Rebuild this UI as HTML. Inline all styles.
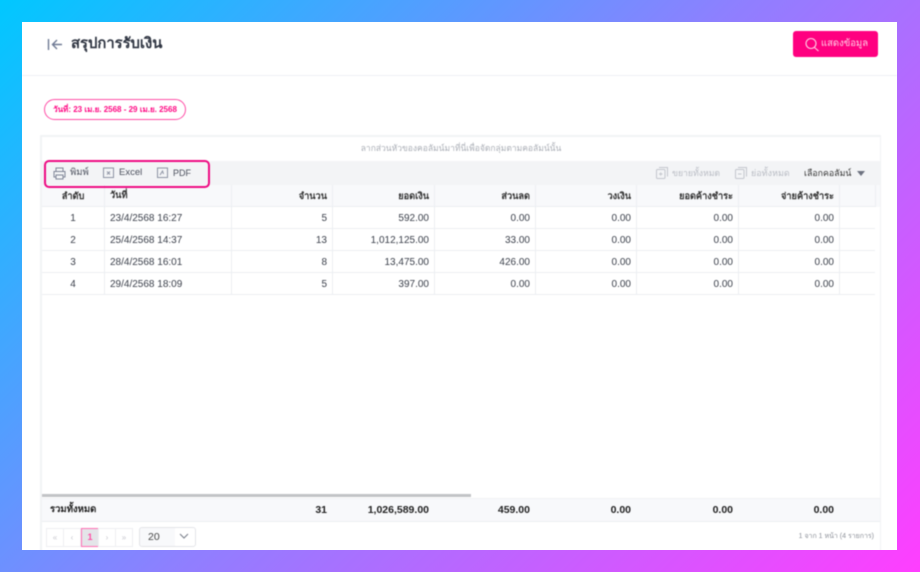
<!DOCTYPE html>
<html><head><meta charset="utf-8">
<style>
*{box-sizing:border-box}
html,body{margin:0;padding:0;width:920px;height:572px;overflow:hidden}
body{background:linear-gradient(135deg,#00c8ff 0%,#8f7fff 50%,#ff3eff 100%);font-family:"Liberation Sans","DejaVu Sans","Noto Sans CJK SC",sans-serif;color:#3a3f4a;position:relative}
.a{position:absolute;white-space:nowrap}
#p{position:absolute;left:22px;top:22px;width:875px;height:528px;background:#fff;overflow:hidden}
#w{position:absolute;left:-22px;top:-22px;width:920px;height:572px;filter:blur(.4px)}
.c{position:absolute;font-size:10px;line-height:22px;height:22px;padding:0 5px;white-space:nowrap;overflow:hidden;margin-top:1px}
.r{text-align:right}.m{text-align:center}
.hd{font-weight:bold;color:#333;font-size:9.2px;margin-top:0;height:22px}
.f{font-weight:bold;color:#222;font-size:10.5px;margin-top:0}
.l{position:absolute;background:#eceef2}
.pg{position:absolute;top:528px;height:19px;width:18px;border:1px solid #eeeff2;font-size:8px;line-height:17px;text-align:center;color:#c8c8cf}
</style></head>
<body>
<div id="p"><div id="w">
<svg class="a" style="left:46px;top:37px" width="18" height="15" viewBox="0 0 18 15" fill="none" stroke="#6f7a94" stroke-width="1.4"><path d="M2.5 2v11"/><path d="M16 7.5H7M11 3L6.5 7.5L11 12"/></svg>
<div class="a" style="left:71px;top:35px;font-size:14.8px;line-height:18px;font-weight:bold;color:#2f3542">สรุปการรับเงิน</div>
<div class="a" style="left:793px;top:31px;width:85px;height:26px;background:#ff0080;border-radius:3px"></div>
<svg class="a" style="left:804px;top:37px" width="16" height="15" viewBox="0 0 16 15" fill="none" stroke="#ffd0e6" stroke-width="1.1"><circle cx="7" cy="6.5" r="5"/><path d="M10.5 10.5L14.5 14"/></svg>
<div class="a" style="left:821px;top:37px;font-size:9.5px;line-height:14px;color:#ffd0e6">แสดงข้อมูล</div>
<div class="a" style="left:22px;top:75px;width:875px;height:1px;background:#eef0f5"></div>
<div class="a" style="left:44px;top:99px;width:142px;height:21px;border:1px solid #ff4da6;border-radius:11px;font-size:8px;line-height:19px;text-align:center;color:#ff0a84;font-weight:bold">วันที่: 23 เม.ย. 2568 - 29 เม.ย. 2568</div>

<div class="a" style="left:40px;top:135px;width:841px;height:420px;border:2px solid #f2f3f5;border-bottom:0;border-right-width:1px"></div>
<div class="a" style="left:42px;top:141px;width:838px;text-align:center;font-size:8.5px;line-height:14px;color:#a9adb5">ลากส่วนหัวของคอลัมน์มาที่นี่เพื่อจัดกลุ่มตามคอลัมน์นั้น</div>
<div class="a" style="left:42px;top:161px;width:838px;height:24px;background:#f3f4f6"></div>
<div class="a" style="left:42px;top:185px;width:838px;height:22px;background:#f8f9fb"></div>
<div class="a" style="left:42px;top:498px;width:838px;height:24px;background:#f8f9fb;border-top:1px solid #f0f1f4;border-bottom:1px solid #eceef2"></div>
<div class="a" style="left:42px;top:494px;width:429px;height:3px;background:#c2c3c6"></div>

<div class="l" style="left:42px;top:206px;width:833px;height:1px"></div>
<div class="l" style="left:42px;top:228px;width:833px;height:1px"></div>
<div class="l" style="left:42px;top:250px;width:833px;height:1px"></div>
<div class="l" style="left:42px;top:272px;width:833px;height:1px"></div>
<div class="l" style="left:42px;top:294px;width:833px;height:1px"></div>
<div class="l" style="left:104px;top:185px;width:1px;height:110px"></div>
<div class="l" style="left:231px;top:185px;width:1px;height:110px"></div>
<div class="l" style="left:332px;top:185px;width:1px;height:110px"></div>
<div class="l" style="left:434px;top:185px;width:1px;height:110px"></div>
<div class="l" style="left:535px;top:185px;width:1px;height:110px"></div>
<div class="l" style="left:636px;top:185px;width:1px;height:110px"></div>
<div class="l" style="left:738px;top:185px;width:1px;height:110px"></div>
<div class="l" style="left:839px;top:185px;width:1px;height:110px"></div>
<div class="l" style="left:875px;top:185px;width:1px;height:22px"></div>

<svg class="a" style="left:53px;top:167px" width="13" height="13" viewBox="0 0 13 13" fill="none" stroke="#7d8496"><path d="M3 4V1h7v3M3 10H1V4.5h11V10h-2M3 8h7v4H3z"/></svg>
<div class="a" style="left:70px;top:166px;font-size:9.5px;line-height:14px;color:#4a4f5c">พิมพ์</div>
<svg class="a" style="left:103px;top:167px" width="12" height="12" viewBox="0 0 12 12" fill="none" stroke="#8d93a3"><rect x=".5" y="1" width="10" height="9.5"/><path d="M4 4.5l3 3M7 4.5l-3 3"/></svg>
<div class="a" style="left:119px;top:166px;font-size:9.5px;line-height:14px;color:#4a4f5c">Excel</div>
<svg class="a" style="left:157px;top:167px" width="12" height="12" viewBox="0 0 12 12" fill="none" stroke="#8d93a3"><rect x=".5" y="1" width="10" height="9.5"/><path d="M3 8l2.5-4 1 3"/></svg>
<div class="a" style="left:173px;top:166px;font-size:9px;line-height:14px;color:#4a4f5c">PDF</div>
<div class="a" style="left:44px;top:160px;width:166px;height:28px;border:2.5px solid #ee0a82;border-radius:5px"></div>

<svg class="a" style="left:656px;top:167px" width="12" height="12" viewBox="0 0 12 12" fill="none" stroke="#c3c6cd"><rect x=".5" y="2.5" width="8.5" height="9" rx="1"/><path d="M3 .5h8.5v9M3 7h3.5M4.7 5.2v3.5"/></svg>
<div class="a" style="left:672px;top:166px;font-size:8.7px;line-height:14px;color:#b9bcc4">ขยายทั้งหมด</div>
<svg class="a" style="left:735px;top:167px" width="12" height="12" viewBox="0 0 12 12" fill="none" stroke="#c3c6cd"><rect x=".5" y="2.5" width="8.5" height="9" rx="1"/><path d="M3 .5h8.5v9M3 7h3.5"/></svg>
<div class="a" style="left:751px;top:166px;font-size:9px;line-height:14px;color:#b9bcc4">ย่อทั้งหมด</div>
<div class="a" style="left:804px;top:166px;font-size:8.8px;line-height:14px;color:#333;font-weight:500">เลือกคอลัมน์</div>
<div class="a" style="left:857px;top:171px;border-left:4px solid transparent;border-right:4px solid transparent;border-top:5px solid #6d7280"></div>

<div class="c hd m" style="left:42px;top:185px;width:62px">ลำดับ</div>
<div class="c hd" style="left:105px;top:184px;width:126px">วันที่</div>
<div class="c hd r" style="left:232px;top:185px;width:100px">จำนวน</div>
<div class="c hd r" style="left:333px;top:185px;width:101px">ยอดเงิน</div>
<div class="c hd r" style="left:435px;top:185px;width:100px">ส่วนลด</div>
<div class="c hd r" style="left:536px;top:185px;width:100px">วงเงิน</div>
<div class="c hd r" style="left:637px;top:185px;width:101px">ยอดค้างชำระ</div>
<div class="c hd r" style="left:739px;top:185px;width:100px">จ่ายค้างชำระ</div>

<div class="c m" style="left:42px;top:207px;width:62px">1</div><div class="c" style="left:105px;top:207px;width:126px">23/4/2568 16:27</div><div class="c r" style="left:232px;top:207px;width:100px">5</div><div class="c r" style="left:333px;top:207px;width:101px">592.00</div><div class="c r" style="left:435px;top:207px;width:100px">0.00</div><div class="c r" style="left:536px;top:207px;width:100px">0.00</div><div class="c r" style="left:637px;top:207px;width:101px">0.00</div><div class="c r" style="left:739px;top:207px;width:100px">0.00</div>

<div class="c m" style="left:42px;top:229px;width:62px">2</div><div class="c" style="left:105px;top:229px;width:126px">25/4/2568 14:37</div><div class="c r" style="left:232px;top:229px;width:100px">13</div><div class="c r" style="left:333px;top:229px;width:101px">1,012,125.00</div><div class="c r" style="left:435px;top:229px;width:100px">33.00</div><div class="c r" style="left:536px;top:229px;width:100px">0.00</div><div class="c r" style="left:637px;top:229px;width:101px">0.00</div><div class="c r" style="left:739px;top:229px;width:100px">0.00</div>

<div class="c m" style="left:42px;top:251px;width:62px">3</div><div class="c" style="left:105px;top:251px;width:126px">28/4/2568 16:01</div><div class="c r" style="left:232px;top:251px;width:100px">8</div><div class="c r" style="left:333px;top:251px;width:101px">13,475.00</div><div class="c r" style="left:435px;top:251px;width:100px">426.00</div><div class="c r" style="left:536px;top:251px;width:100px">0.00</div><div class="c r" style="left:637px;top:251px;width:101px">0.00</div><div class="c r" style="left:739px;top:251px;width:100px">0.00</div>

<div class="c m" style="left:42px;top:273px;width:62px">4</div><div class="c" style="left:105px;top:273px;width:126px">29/4/2568 18:09</div><div class="c r" style="left:232px;top:273px;width:100px">5</div><div class="c r" style="left:333px;top:273px;width:101px">397.00</div><div class="c r" style="left:435px;top:273px;width:100px">0.00</div><div class="c r" style="left:536px;top:273px;width:100px">0.00</div><div class="c r" style="left:637px;top:273px;width:101px">0.00</div><div class="c r" style="left:739px;top:273px;width:100px">0.00</div>

<div class="c f" style="left:45px;top:499px;width:120px;font-size:9.5px">รวมทั้งหมด</div>
<div class="c f r" style="left:232px;top:499px;width:100px">31</div>
<div class="c f r" style="left:333px;top:499px;width:101px">1,026,589.00</div>
<div class="c f r" style="left:435px;top:499px;width:100px">459.00</div>
<div class="c f r" style="left:536px;top:499px;width:100px">0.00</div>
<div class="c f r" style="left:637px;top:499px;width:101px">0.00</div>
<div class="c f r" style="left:739px;top:499px;width:100px">0.00</div>

<div class="pg" style="left:46px">«</div>
<div class="pg" style="left:63px">‹</div>
<div class="pg" style="left:81px;background:#e4e5e9;border-color:#ff6fb5;color:#ff4da6;font-weight:bold;font-size:9px">1</div>
<div class="pg" style="left:98px">›</div>
<div class="pg" style="left:115px">»</div>
<div class="a" style="left:139px;top:527px;width:57px;height:20px;border:1px solid #e3e4e8;border-radius:3px;background:linear-gradient(90deg,#f8f9fb 0 35px,#fff 35px);font-size:10.5px;line-height:19px;padding-left:8px;color:#444">20</div>
<svg class="a" style="left:179px;top:533px" width="10" height="7" viewBox="0 0 10 7" fill="none" stroke="#777c88"><path d="M1 1l4 4 4-4"/></svg>
<div class="a" style="left:760px;top:530px;width:114px;text-align:right;font-size:7px;line-height:13px;color:#8b8f98">1 จาก 1 หน้า (4 รายการ)</div>
</div></div>
</body></html>
